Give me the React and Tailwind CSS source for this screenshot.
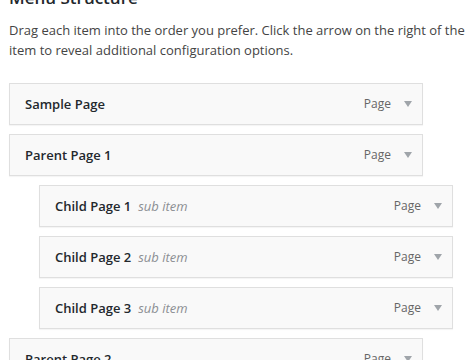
import React from "react";

function Arrow() {
  return (
    <svg width="8" height="6" viewBox="0 0 8 6" className="block">
      <path d="M0 0 H8 L4 6 Z" fill="#a0a5aa" />
    </svg>
  );
}

function Item({ title, sub, indent }) {
  return (
    <div
      className={
        "w-[414px] h-[42px] shrink-0 border border-[#dfdfdf] bg-[#f9f9f9] shadow-[0_1px_1px_rgba(0,0,0,0.04)] flex items-center justify-between pl-[15px] pr-[10px] " +
        (indent ? "ml-[30px]" : "")
      }
    >
      <div className="flex items-center text-[13px] leading-[20px]">
        <span className="font-semibold text-[#23282d]">{title}</span>
        {sub && <span className="italic text-[#8c8f94] ml-[7px]">sub item</span>}
      </div>
      <div className="flex items-center">
        <span className="text-[12px] leading-[20px] text-[#666666]">Page</span>
        <span className="ml-[13px]">
          <Arrow />
        </span>
      </div>
    </div>
  );
}

export default function App() {
  return (
    <div
      className="w-[472px] h-[360px] overflow-hidden bg-white pl-[9px]"
      style={{ fontFamily: '"Open Sans", "Noto Sans", sans-serif' }}
    >
      <h2 className="-mt-[13px] text-[17px] leading-[22px] font-semibold text-[#23282d]">
        Menu Structure
      </h2>
      <p className="mt-[11px] text-[13px] leading-[20px] text-[#444444]">
        Drag each item into the order you prefer. Click the arrow on the right of the item to reveal additional configuration options.
      </p>
      <div className="mt-[23px] flex flex-col gap-[9px]">
        <Item title="Sample Page" />
        <Item title="Parent Page 1" />
        <Item title="Child Page 1" sub indent />
        <Item title="Child Page 2" sub indent />
        <Item title="Child Page 3" sub indent />
        <Item title="Parent Page 2" />
      </div>
    </div>
  );
}
